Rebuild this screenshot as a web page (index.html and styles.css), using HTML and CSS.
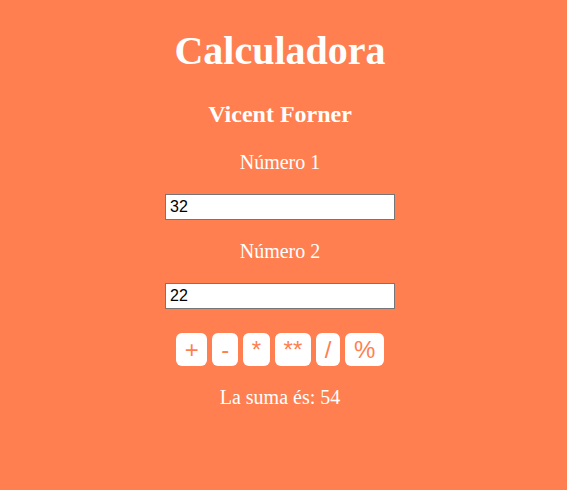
FILE: index.html
```html
<!DOCTYPE html>
<html lang="ca">
<head>
<meta charset="utf-8">
<title>Calculadora</title>
<link rel="stylesheet" href="styles.css">
</head>
<body>
<main class="calc">
  <h1 class="title">Calculadora</h1>
  <h2 class="author">Vicent Forner</h2>
  <p class="label">Número 1</p>
  <input class="field" type="text" value="32">
  <p class="label">Número 2</p>
  <input class="field" type="text" value="22">
  <div class="ops">
    <button class="op">+</button>
    <button class="op">-</button>
    <button class="op">*</button>
    <button class="op">**</button>
    <button class="op">/</button>
    <button class="op">%</button>
  </div>
  <p class="result">La suma és: 54</p>
</main>
</body>
</html>
```

FILE: styles.css
```css
html, body {
  margin: 0;
  padding: 0;
  background: #ff7f50;
  height: 100%;
}

body {
  font-family: "Liberation Serif", "Times New Roman", serif;
  font-size: 20px;
  color: #ffffff;
}

.calc {
  display: flex;
  flex-direction: column;
  align-items: center;
  padding-top: 28px;
  padding-right: 7px;
}

.title {
  margin: 0;
  font-size: 40px;
  font-weight: bold;
  line-height: 46px;
}

.author {
  margin: 26px 0 0;
  font-size: 24px;
  font-weight: bold;
  line-height: 28px;
}

.label {
  margin: 23px 0 0;
  font-size: 20px;
  line-height: 23px;
}

.label + .field {
  margin-top: 20px;
}

.field + .label {
  margin-top: 20px;
}

.field {
  box-sizing: border-box;
  width: 230px;
  height: 26px;
  margin: 0;
  padding: 2px 4px;
  border: 1px solid #767676;
  border-radius: 0;
  background: #ffffff;
  font-family: "Liberation Sans", Arial, sans-serif;
  font-size: 16px;
  color: #000000;
}

.ops {
  display: flex;
  gap: 5px;
  margin-top: 24px;
}

.op {
  box-sizing: border-box;
  height: 33px;
  margin: 0;
  padding: 0 8.75px;
  border: 0;
  border-radius: 6px;
  background: #ffffff;
  color: #ff7f50;
  font-family: "Liberation Sans", Arial, sans-serif;
  font-size: 24px;
  line-height: 33px;
}

.result {
  margin: 20px 0 0;
  font-size: 20px;
  line-height: 23px;
}
```
